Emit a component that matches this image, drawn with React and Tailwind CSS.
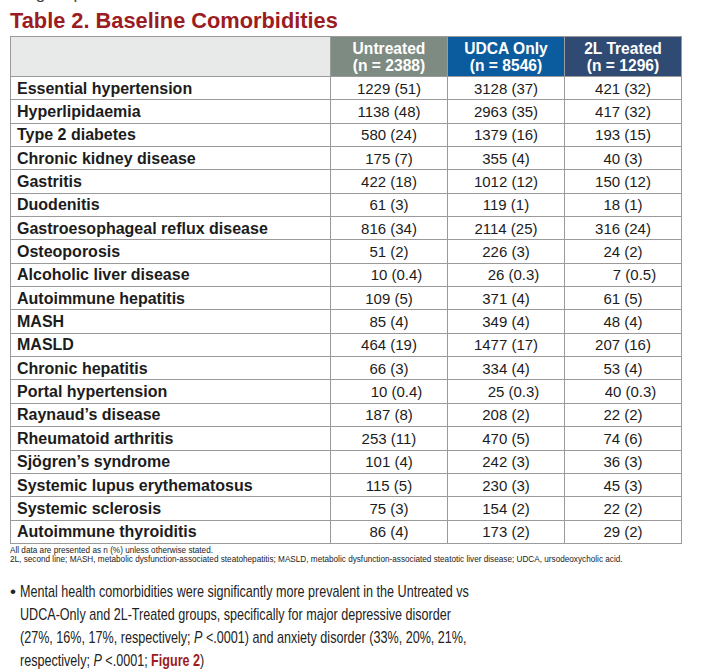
import React from 'react';

const ROWS = [
  ['Essential hypertension', '1229 (51)', '3128 (37)', '421 (32)'],
  ['Hyperlipidaemia', '1138 (48)', '2963 (35)', '417 (32)'],
  ['Type 2 diabetes', '580 (24)', '1379 (16)', '193 (15)'],
  ['Chronic kidney disease', '175 (7)', '355 (4)', '40 (3)'],
  ['Gastritis', '422 (18)', '1012 (12)', '150 (12)'],
  ['Duodenitis', '61 (3)', '119 (1)', '18 (1)'],
  ['Gastroesophageal reflux disease', '816 (34)', '2114 (25)', '316 (24)'],
  ['Osteoporosis', '51 (2)', '226 (3)', '24 (2)'],
  ['Alcoholic liver disease', '10 (0.4)', '26 (0.3)', '7 (0.5)'],
  ['Autoimmune hepatitis', '109 (5)', '371 (4)', '61 (5)'],
  ['MASH', '85 (4)', '349 (4)', '48 (4)'],
  ['MASLD', '464 (19)', '1477 (17)', '207 (16)'],
  ['Chronic hepatitis', '66 (3)', '334 (4)', '53 (4)'],
  ['Portal hypertension', '10 (0.4)', '25 (0.3)', '40 (0.3)'],
  ['Raynaud’s disease', '187 (8)', '208 (2)', '22 (2)'],
  ['Rheumatoid arthritis', '253 (11)', '470 (5)', '74 (6)'],
  ['Sjögren’s syndrome', '101 (4)', '242 (3)', '36 (3)'],
  ['Systemic lupus erythematosus', '115 (5)', '230 (3)', '45 (3)'],
  ['Systemic sclerosis', '75 (3)', '154 (2)', '22 (2)'],
  ['Autoimmune thyroiditis', '86 (4)', '173 (2)', '29 (2)'],
];

// decimal values sit a little right of centre in the source table
const shift = (v) => {
  if (v === '7 (0.5)') return 'pl-[23px]';
  if (v.includes('.')) return 'pl-[15px]';
  return '';
};

const HEADS = [
  { top: 'Untreated', n: '(n = 2388)', bg: 'bg-[#7e8b82]' },
  { top: 'UDCA Only', n: '(n = 8546)', bg: 'bg-[#0b5c9e]' },
  { top: '2L Treated', n: '(n = 1296)', bg: 'bg-[#2f4b73]' },
];

export default function App() {
  return (
    <div className="w-[718px] h-[670px] bg-white overflow-hidden font-['Liberation_Sans',Arial,sans-serif] text-[#1c1c1c]">
      {/* tail of the paragraph above, cut off by the crop */}
      <div className="h-[5px] overflow-hidden pl-[14px]">
        <div className="-mt-[16px] text-[17px] leading-[20px] text-[#444]">sing&nbsp;&nbsp;&nbsp;&nbsp;&nbsp;&nbsp;p</div>
      </div>

      <h1 className="pl-[10px] mt-[3px] text-[21.8px] leading-[26px] font-bold text-[#9b1c22]">Table 2. Baseline Comorbidities</h1>

      <table className="ml-[10px] mt-[2px] border-collapse table-fixed w-[671px]">
        <colgroup>
          <col className="w-[320px]" />
          <col className="w-[117px]" />
          <col className="w-[117px]" />
          <col className="w-[117px]" />
        </colgroup>
        <thead>
          <tr className="h-[40px]">
            <th className="border border-[#9a9a9a] bg-[#e7eae8]" />
            {HEADS.map((h) => (
              <th key={h.top} className={`border border-[#9a9a9a] ${h.bg} text-white font-bold text-[15.6px] leading-[17px] text-center align-middle`}>
                <div>{h.top}</div>
                <div>{h.n}</div>
              </th>
            ))}
          </tr>
        </thead>
        <tbody>
          {ROWS.map((r) => (
            <tr key={r[0]} className="h-[23.35px]">
              <td className="border border-[#9a9a9a] pl-[6px] text-[16px] leading-[17px] font-bold">{r[0]}</td>
              {r.slice(1).map((v, i) => (
                <td key={i} className={`border border-[#9a9a9a] text-center text-[15px] leading-[17px] ${shift(v)}`}>{v}</td>
              ))}
            </tr>
          ))}
        </tbody>
      </table>

      <div className="pl-[10px] mt-[2px] text-[8.2px] leading-[9px] text-[#222]">
        <p>All data are presented as n (%) unless otherwise stated.</p>
        <p>2L, second line; MASH, metabolic dysfunction-associated steatohepatitis; MASLD, metabolic dysfunction-associated steatotic liver disease; UDCA, ursodeoxycholic acid.</p>
      </div>

      <div className="mt-[16px] flex text-[17px] leading-[23px] text-[#222]">
        <span className="w-[20px] pl-[10px] shrink-0">•</span>
        <p className="whitespace-nowrap scale-x-[0.74] origin-left">
          Mental health comorbidities were significantly more prevalent in the Untreated vs<br />
          UDCA-Only and 2L-Treated groups, specifically for major depressive disorder<br />
          (27%, 16%, 17%, respectively; <i>P</i> &lt;.0001) and anxiety disorder (33%, 20%, 21%,<br />
          respectively; <i>P</i> &lt;.0001; <b className="text-[#9b1c22]">Figure 2</b>)
        </p>
      </div>
    </div>
  );
}
